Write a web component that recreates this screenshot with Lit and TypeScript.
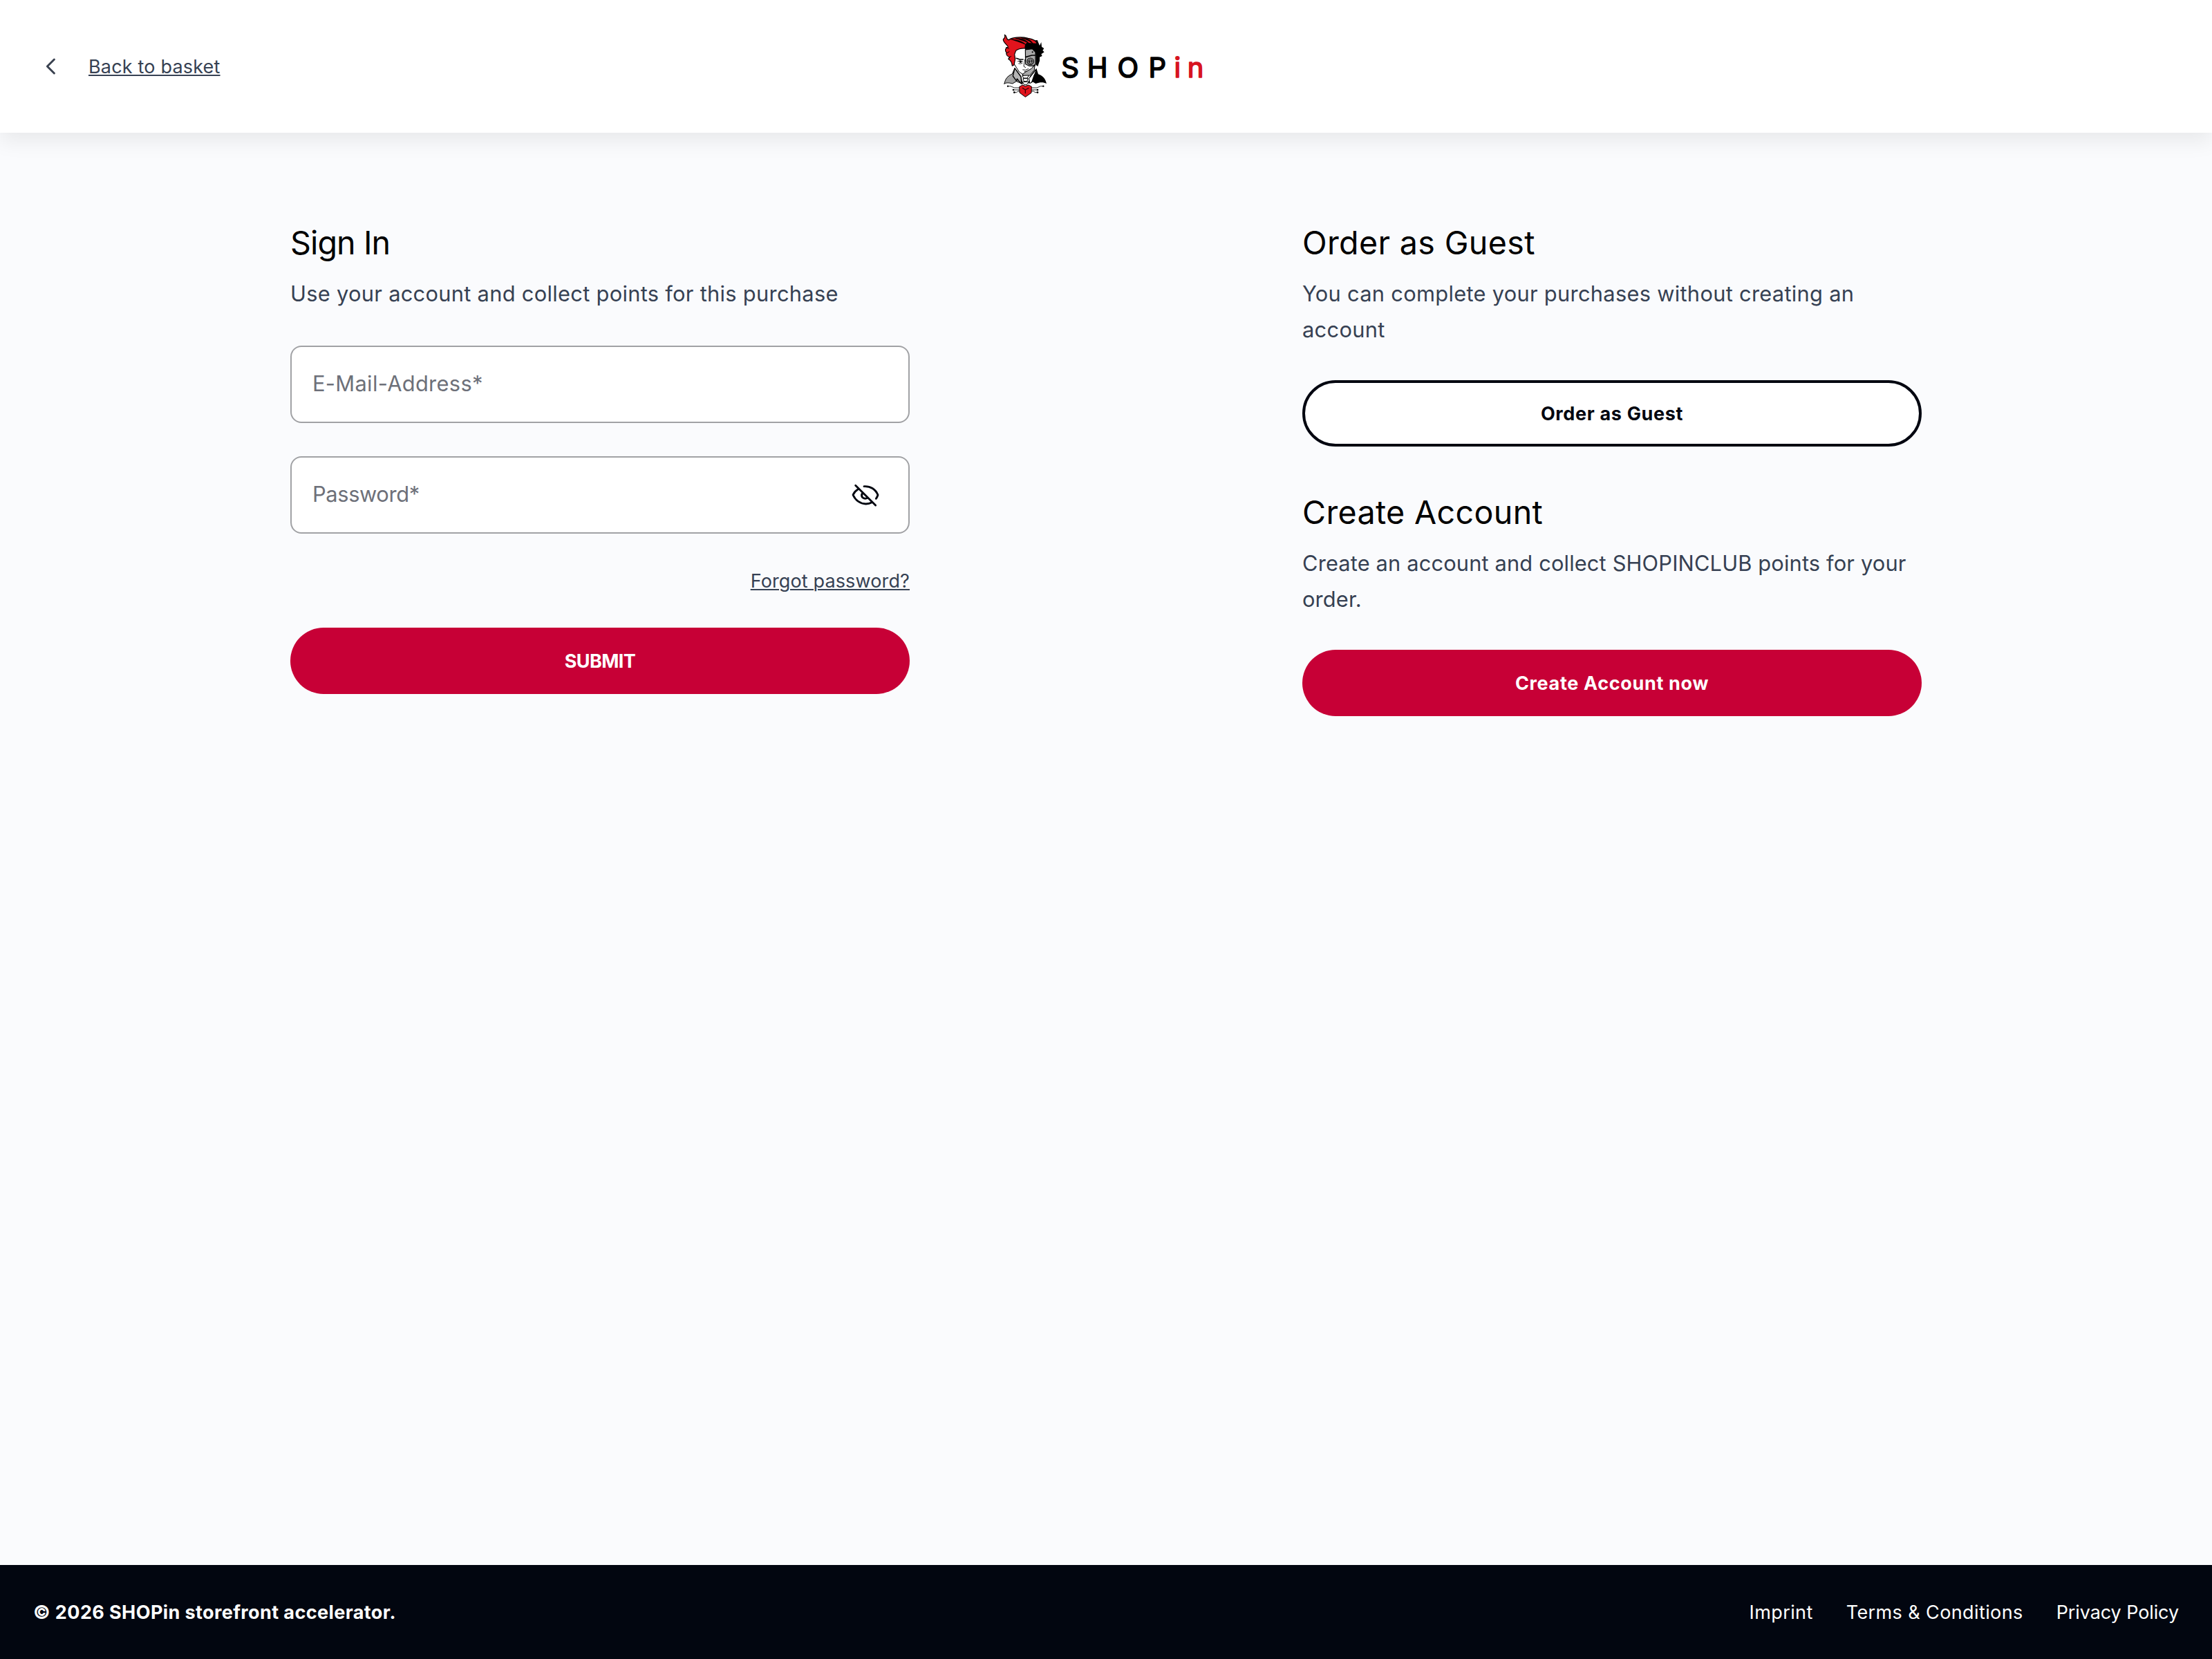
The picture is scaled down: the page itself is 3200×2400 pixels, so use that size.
import { LitElement, html, css, svg } from "lit";
import { customElement } from "lit/decorators.js";

const mascot = svg`
  <g stroke-linejoin="round" stroke-linecap="round">
    <!-- coat -->
    <path d="M69 273C73 252 82 240 103 231L114 206L140 240L148 274L121 263L104 273C92 270 80 267 69 273Z" fill="#a3a3a3" stroke="#000" stroke-width="3"/>
    <path d="M114 206L106 240L122 262L124 252L143 274L141 243Z" fill="#b5b5b5" stroke="#000" stroke-width="4"/>
    <path d="M252 273C247 252 238 240 216 232L208 206L180 240L173 274L190 264L205 273C225 266 238 266 252 273Z"/>
    <path d="M206 214L200 255L180 272L176 252Z" fill="#fff" stroke="#000" stroke-width="3"/>
    <path d="M206 216L210 240L196 262L184 272L196 238Z"/>
    <!-- face -->
    <path d="M114 118L109 150L113 190L133 222L158 238L186 226L204 190L204 120L160 100Z" fill="#fff" stroke="#000" stroke-width="3"/>
    <path d="M147 233L163 221L186 208L201 192L199 214L178 238L158 240Z" fill="#aaa" stroke="#000" stroke-width="3"/>
    <!-- metal plate -->
    <path d="M160 126L190 122L204 136V188L194 196L176 196L161 188Z" fill="#aaa" stroke="#000" stroke-width="3.5"/>
    <path d="M161 158L188 150H203" fill="none" stroke="#000" stroke-width="5"/>
    <circle cx="191" cy="136" r="3.4"/>
    <circle cx="182" cy="176" r="14" fill="#999" stroke="#000" stroke-width="3.5"/>
    <circle cx="182" cy="176" r="8.5"/>
    <path d="M178 172Q184 167 186 173L179 179Q182 185 187 180" fill="none" stroke="#fff" stroke-width="2.6"/>
    <!-- left eye, nose, mouth -->
    <path d="M121 163L136 168L150 168" fill="none" stroke="#000" stroke-width="5"/>
    <path d="M127 176Q137 169 149 177M131 186Q140 189 147 184" fill="none" stroke="#000" stroke-width="2.5"/>
    <circle cx="139" cy="178" r="5"/>
    <path d="M158 168L153 198L161 203M149 213Q160 218 173 209M156 221L166 219" fill="none" stroke="#000" stroke-width="2.6"/>
    <!-- hair -->
    <path d="M156 90L212 84L222 108L229 93L231 113L241 120L235 129L242 136L229 145L233 153L222 158V174L214 198L206 192V150L203 136L190 122L160 126L154 112Z"/>
    <path d="M70 61C84 67 73 81 88 83C102 72 140 68 172 76C196 80 208 88 211 100L166 98C157 104 160 114 159 120C144 119 130 122 119 130L113 146L116 166L111 192L103 196C102 182 96 172 86 166L92 158C80 154 76 146 78 138C70 130 72 118 85 114C82 104 62 94 64 80C70 76 74 72 70 61Z" fill="#e1141d" stroke="#000" stroke-width="3.5"/>
    <path d="M118 77C146 74 166 86 178 100C158 88 144 84 118 77ZM142 74C170 74 188 86 194 102C178 86 166 82 142 74ZM98 80C124 82 150 90 162 104C142 94 124 90 98 80Z" stroke="#000" stroke-width="2"/>
    <path d="M76 116L88 120M80 140L90 134M88 162L98 154" fill="none" stroke="#000" stroke-width="3"/>
    <!-- neck -->
    <path d="M148 238L175 237L169 249H153ZM151 251H172L167 263H155ZM148 266L175 264L166 278H157Z" fill="#fff" stroke="#000" stroke-width="3"/>
    <!-- circuit heart -->
    <path d="M84 284H96L112 291H136M108 300H136M112 311H122L128 306H137M238 284H226L210 291H187M213 300H187M213 311H202L196 306H187" fill="none" stroke="#000" stroke-width="2.5"/>
    <circle cx="84" cy="284" r="3.5"/><circle cx="108" cy="300" r="4"/><circle cx="112" cy="311" r="4"/>
    <circle cx="238" cy="284" r="3.5"/><circle cx="213" cy="300" r="4"/><circle cx="213" cy="311" r="4"/>
    <path d="M135 286L148 279L160 284L174 279L187 286L186 313L160 331L136 313Z" fill="#e1141d" stroke="#000" stroke-width="3"/>
    <path d="M148 292L160 300L174 292M160 300V314" fill="none" stroke="#3a0508" stroke-width="4"/>
  </g>`;

@customElement("app-root")
export class AppRoot extends LitElement {
  static styles = css`
    :host {
      display: flex;
      flex-direction: column;
      width: 3200px;
      height: 2400px;
      background: #fafbfd;
      color: #020610;
      font-family: Inter, "Liberation Sans", sans-serif;
    }
    * { box-sizing: border-box; }
    h2, p { margin: 0; font-weight: 400; }
    svg { display: block; flex: none; }
    a { color: inherit; }
    .header {
      display: grid;
      grid-template-columns: 1fr auto 1fr;
      align-items: center;
      height: 192px;
      flex: none;
      padding: 0 48px;
      background: #fff;
      box-shadow: 0 12px 28px 0 rgba(0, 0, 0, 0.075);
    }
    .back { display: flex; align-items: center; gap: 32px; color: #364153; }
    .link {
      font-size: 27px;
      line-height: 40px;
      color: #364153;
      text-decoration: underline;
      text-decoration-thickness: 2px;
      text-underline-offset: 2px;
    }
    .back .link { letter-spacing: 0.18px; padding-top: 1px; }
    .word { font-size: 40px; font-weight: 400; stroke-width: 1.6px; stroke-linejoin: round; }
    .black { fill: #000; stroke: #000; }
    .red { fill: #d7141f; stroke: #d7141f; }
    .main {
      flex: 1;
      display: flex;
      justify-content: space-between;
      align-items: flex-start;
      padding: 129px 420px 0;
    }
    .col { width: 896px; display: flex; flex-direction: column; }
    .title { font-size: 46.6px; line-height: 60px; color: #000; letter-spacing: 0.35px; }
    .signin { letter-spacing: -0.9px; }
    .text { margin-top: 18px; font-size: 30.8px; line-height: 52px; color: #364153; letter-spacing: 0.3px; }
    .club { letter-spacing: 0.154px; }
    .field {
      display: flex;
      align-items: center;
      justify-content: space-between;
      height: 112px;
      padding: 0 40px 2px 30px;
      border: 2px solid #a1a2a5;
      border-radius: 16px;
      background: #fff;
      color: #6d7079;
      font-size: 30.8px;
      line-height: 52px;
      letter-spacing: 0.33px;
    }
    .email { margin: 49px 0 48px; }
    .password { letter-spacing: -0.35px; }
    .eye { margin-top: 2px; }
    .forgot { align-self: flex-end; margin: 49px 0 47px; letter-spacing: 0.13px; }
    .btn {
      display: flex;
      align-items: center;
      justify-content: center;
      height: 96px;
      border: 0;
      padding: 2px 0 0;
      border-radius: 48px;
      font: 700 27px/40px Inter, "Liberation Sans", sans-serif;
      letter-spacing: 0.66px;
      background: #c70036;
      color: #fff;
    }
    .submit { letter-spacing: -0.6px; }
    .right .btn { margin-top: 47px; }
    .outline { background: #fff; border: 4px solid #020610; color: #020610; }
    .second { margin-top: 65px; }
    .footer {
      flex: none;
      display: flex;
      align-items: center;
      justify-content: space-between;
      height: 136px;
      padding: 2px 48px 0;
      background: #020610;
      color: #fff;
      font-size: 27px;
      line-height: 40px;
    }
    .copy { font-weight: 700; letter-spacing: 0.4px; }
    .links { display: flex; gap: 48px; }
    .links a { text-decoration: none; letter-spacing: 0.4px; }
    .links .privacy { letter-spacing: -0.1px; }
  `;

  render() {
    return html`
      <header class="header">
        <div class="back">
          <svg width="48" height="48" viewBox="0 0 48 48" fill="none" stroke="#3a4250" stroke-width="3" stroke-linecap="round" stroke-linejoin="round">
            <path d="M30.4 34L20.4 24L30.4 14"/>
          </svg>
          <a class="link">Back to basket</a>
        </div>
        <svg width="300" height="112" viewBox="1450 40 300 112" aria-label="SHOPin">
          <g transform="translate(1430 30) scale(0.33333)">${mascot}</g>
          <text class="word black" y="112" x="1535.2 1572.7 1616.4 1661.5">SHOP</text>
          <text class="word red" y="112" x="1698.6 1717.8">in</text>
        </svg>
        <span></span>
      </header>
      <main class="main">
        <section class="col">
          <h2 class="title signin">Sign In</h2>
          <p class="text">Use your account and collect points for this purchase</p>
          <div class="field email">E-Mail-Address*</div>
          <div class="field password">
            <span>Password*</span>
            <svg class="eye" width="44" height="36" viewBox="120 84 132 108" fill="none" stroke="#020610" stroke-width="8.6" stroke-linecap="round" stroke-linejoin="round">
              <path d="M143 97L230 183M180 101C208 99 230 114 240 138Q237 148 232 154M153 114Q139 122 132 138C144 163 164 176 188 177Q203 176 214 170M174 129Q166 138 172 148Q182 158 196 151"/>
            </svg>
          </div>
          <a class="link forgot">Forgot password?</a>
          <button class="btn submit">SUBMIT</button>
        </section>
        <section class="col right">
          <h2 class="title">Order as Guest</h2>
          <p class="text">You can complete your purchases without creating an account</p>
          <button class="btn outline">Order as Guest</button>
          <h2 class="title second">Create Account</h2>
          <p class="text club">Create an account and collect SHOPINCLUB points for your order.</p>
          <button class="btn">Create Account now</button>
        </section>
      </main>
      <footer class="footer">
        <span class="copy">© 2026 SHOPin storefront accelerator.</span>
        <nav class="links">
          <a>Imprint</a><a>Terms &amp; Conditions</a><a class="privacy">Privacy Policy</a>
        </nav>
      </footer>
    `;
  }
}
